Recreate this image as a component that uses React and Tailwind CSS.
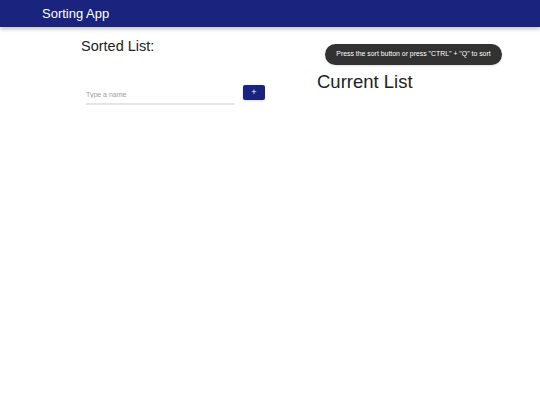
import { useState } from 'react';

export default function App() {
  const [name, setName] = useState('');

  return (
    <div className="relative min-h-[405px] bg-white font-['Liberation_Sans',Arial,sans-serif] text-[#222]">
      <header className="h-[27px] bg-[#1a237e] shadow-[0_2px_4px_rgba(0,0,0,0.25)] flex items-center pl-[42px]">
        <h1 className="text-white text-[13px] leading-none">Sorting App</h1>
      </header>

      {/* Snackbar hint */}
      <div className="absolute left-[325px] top-[44px] w-[177px] h-[21px] rounded-full bg-[#323232] flex items-center justify-center shadow">
        <span className="text-white text-[6.9px] whitespace-nowrap">
          Press the sort button or press "CTRL" + "Q" to sort
        </span>
      </div>

      <main className="flex">
        <section className="w-[236px] ml-[81px] pt-[9px]">
          <h2 className="text-[14.5px] leading-[20px]">Sorted List:</h2>
          <div className="flex items-start mt-[24px]">
            <div className="ml-[5px] w-[148px]">
              <input
                value={name}
                onChange={e => setName(e.target.value)}
                placeholder="Type a name"
                className="w-full h-[19px] text-[7px] outline-none border-b-2 border-[#e5e5e5] placeholder:text-[#9e9e9e] bg-transparent"
              />
            </div>
            <button className="ml-[9px] mt-[5px] w-[22px] h-[15px] rounded-[2px] bg-[#1a237e] text-white text-[9px] leading-none flex items-center justify-center shadow">
              +
            </button>
          </div>
        </section>

        <section className="pt-[43px]">
          <h2 className="text-[18.5px] leading-[24px]">Current List</h2>
        </section>
      </main>
    </div>
  );
}
